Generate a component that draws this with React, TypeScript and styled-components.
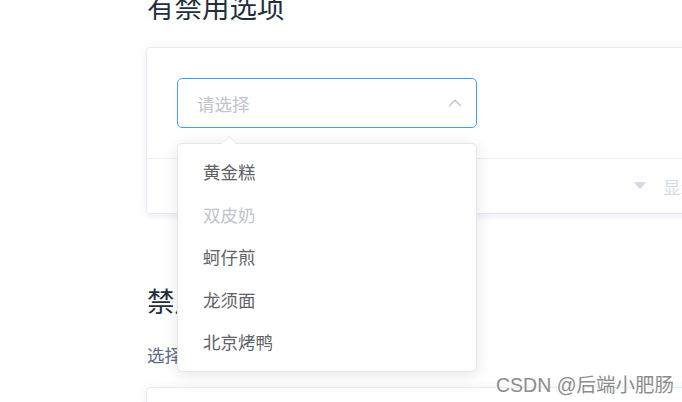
import React, { FC } from 'react';
import styled, { createGlobalStyle } from 'styled-components';

const GlobalStyle = createGlobalStyle`
  html, body {
    margin: 0;
    padding: 0;
    background: #fff;
    overflow: hidden;
  }
  body {
    font-family: "Noto Sans CJK SC", "Liberation Sans", sans-serif;
  }
`;

const Page = styled.div`
  position: relative;
  width: 682px;
  height: 402px;
  overflow: hidden;
`;

const Content = styled.div`
  margin-top: -14px;
  padding-left: 146px;
  width: 720px;
`;

const Title = styled.h3<{ $top?: number }>`
  margin: ${({ $top }) => $top ?? 0}px 0 0 1px;
  font-size: 27.5px;
  font-weight: 400;
  line-height: 41px;
  color: #1f2f3d;
`;

const Desc = styled.p`
  margin: 21px 0 0 1px;
  font-size: 17.5px;
  line-height: 26px;
  color: #5e6d82;
`;

const DemoBlock = styled.div<{ $top: number }>`
  margin-top: ${({ $top }) => $top}px;
  border: 1px solid #ebebeb;
  border-radius: 4px;
  box-shadow: 0 0 10px 0 rgba(232, 237, 250, 0.6), 0 2.5px 5px 0 rgba(232, 237, 250, 0.5);
`;

const Source = styled.div`
  position: relative;
  padding: 30px;
`;

const SelectBox = styled.div`
  box-sizing: border-box;
  width: 300px;
  height: 50px;
  display: flex;
  align-items: center;
  justify-content: space-between;
  padding: 0 14px 0 19px;
  border: 1px solid #409eff;
  border-radius: 5px;
  font-size: 17.5px;
  color: #c0c4cc;
`;

const Control = styled.div`
  box-sizing: border-box;
  height: 55px;
  border-top: 1px solid #eaeefb;
  display: flex;
  align-items: center;
  padding-left: 487px;
  gap: 17px;
  color: #d3dce6;
  font-size: 17.5px;
`;

const Dropdown = styled.div`
  position: absolute;
  left: 30px;
  top: 95px;
  z-index: 10;
  box-sizing: border-box;
  width: 300px;
  padding: 7px 0;
  background: #fff;
  border: 1px solid #e4e7ed;
  border-radius: 5px;
  box-shadow: 0 2.5px 15px 0 rgba(0, 0, 0, 0.1);

  &::before,
  &::after {
    content: '';
    position: absolute;
    left: 43px;
    width: 0;
    height: 0;
    border: 8px solid transparent;
    border-top-width: 0;
  }
  &::before {
    top: -8px;
    border-bottom-color: #e4e7ed;
  }
  &::after {
    top: -7px;
    border-bottom-color: #fff;
  }
`;

const Option = styled.div<{ $disabled?: boolean }>`
  height: 42.5px;
  line-height: 42.5px;
  padding: 0 25px;
  font-size: 17.5px;
  color: ${({ $disabled }) => ($disabled ? '#c0c4cc' : '#606266')};
`;

const Watermark = styled.div`
  position: absolute;
  right: 8px;
  bottom: 4px;
  font-family: "Liberation Sans", "Noto Sans CJK SC", sans-serif;
  font-size: 19.5px;
  color: #8c8c8c;
  text-shadow: 0 0 2px #fff, 0 0 2px #fff;
  white-space: nowrap;
`;

const options = [
  { label: '黄金糕' },
  { label: '双皮奶', disabled: true },
  { label: '蚵仔煎' },
  { label: '龙须面' },
  { label: '北京烤鸭' },
];

const ArrowUp: FC = () => (
  <svg width="14" height="8" viewBox="0 0 14 8" fill="none">
    <path d="M1 7.2 L7 1.2 L13 7.2" stroke="#c0c4cc" strokeWidth="1.3" />
  </svg>
);

const CaretDown: FC = () => (
  <svg width="12" height="8" viewBox="0 0 12 8">
    <path d="M0 0 H12 L6 7.5 Z" fill="#d3dce6" />
  </svg>
);

const App: FC = () => (
  <Page>
    <GlobalStyle />
    <Content>
      <Title>有禁用选项</Title>
      <DemoBlock $top={20}>
        <Source>
          <SelectBox>
            <span>请选择</span>
            <ArrowUp />
          </SelectBox>
          <Dropdown>
            {options.map((o) => (
              <Option key={o.label} $disabled={o.disabled}>
                {o.label}
              </Option>
            ))}
          </Dropdown>
        </Source>
        <Control>
          <CaretDown />
          <span>显示代码</span>
        </Control>
      </DemoBlock>
      <Title $top={66}>禁用状态</Title>
      <Desc>选择器不可用状态</Desc>
      <DemoBlock $top={19}>
        <Source style={{ height: 60 }} />
      </DemoBlock>
    </Content>
    <Watermark>CSDN @后端小肥肠</Watermark>
  </Page>
);

export default App;
